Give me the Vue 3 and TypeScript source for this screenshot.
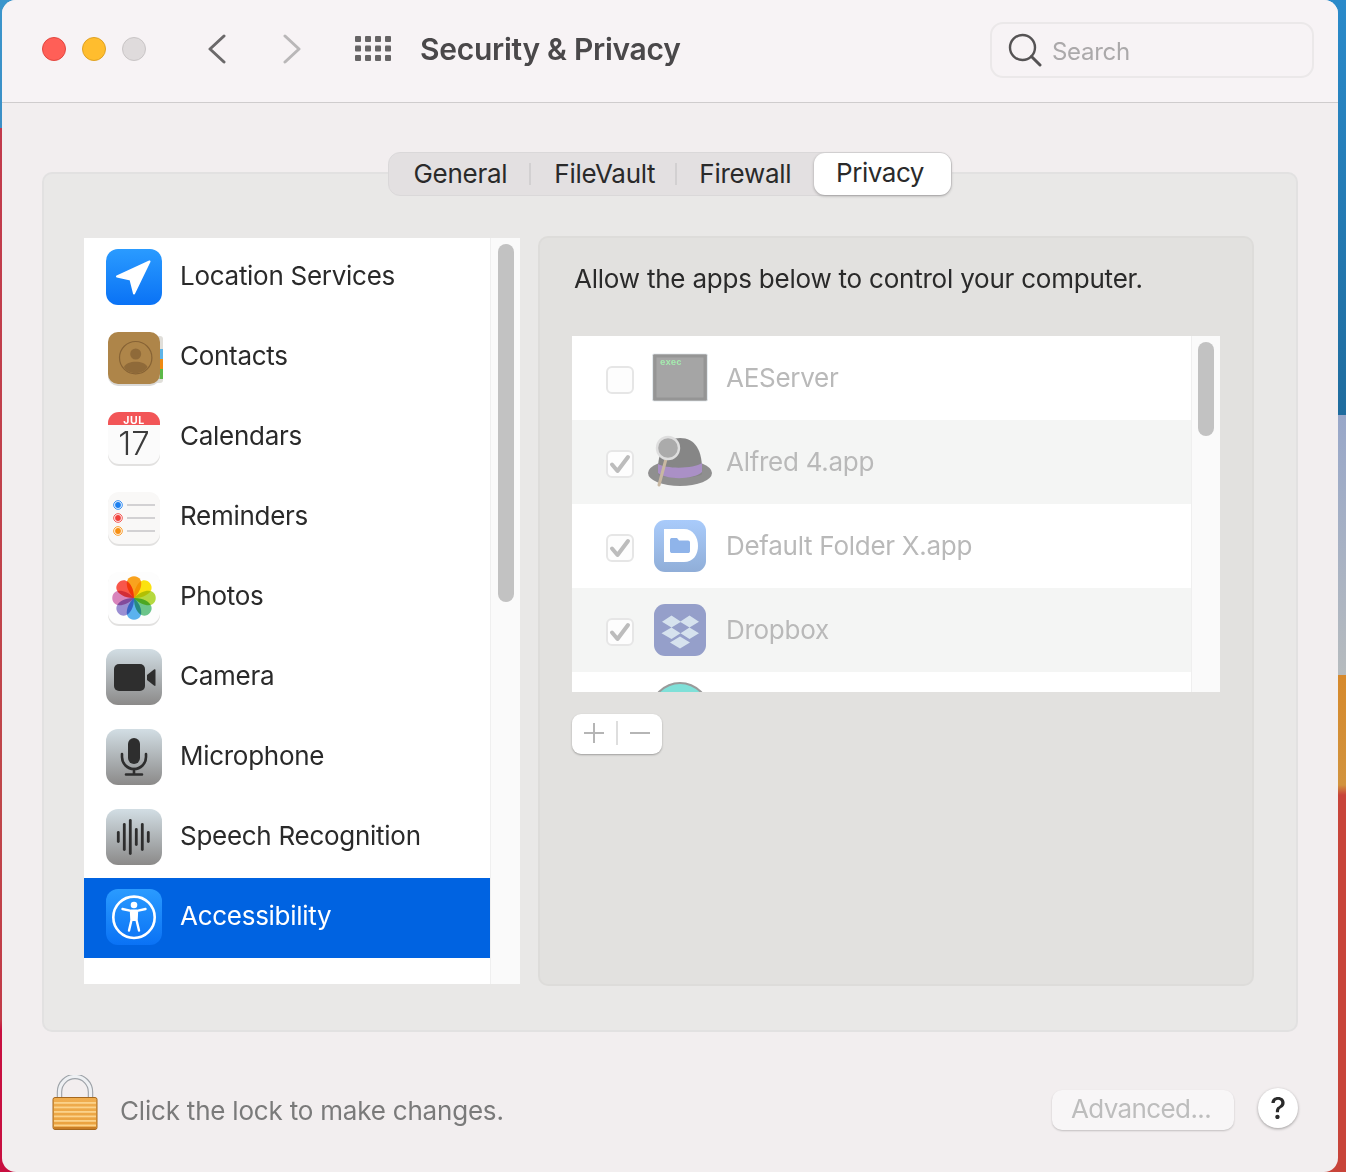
<script setup lang="ts">
const tabs = ['General', 'FileVault', 'Firewall']
const services = [
  { id: 'location', label: 'Location Services' },
  { id: 'contacts', label: 'Contacts' },
  { id: 'calendars', label: 'Calendars' },
  { id: 'reminders', label: 'Reminders' },
  { id: 'photos', label: 'Photos' },
  { id: 'camera', label: 'Camera' },
  { id: 'microphone', label: 'Microphone' },
  { id: 'speech', label: 'Speech Recognition' },
  { id: 'accessibility', label: 'Accessibility' },
]
const apps = [
  { id: 'exec', label: 'AEServer', checked: false },
  { id: 'alfred', label: 'Alfred 4.app', checked: true },
  { id: 'folder', label: 'Default Folder X.app', checked: true },
  { id: 'dropbox', label: 'Dropbox', checked: true },
  { id: 'teal', label: '', checked: true },
]
const petals = [
  { a: 0, c: '#f9a21e' },
  { a: 45, c: '#fbe20f' },
  { a: 90, c: '#b4d83e' },
  { a: 135, c: '#6cc58a' },
  { a: 180, c: '#5bb2ee' },
  { a: 225, c: '#9a8ed2' },
  { a: 270, c: '#d884bc' },
  { a: 315, c: '#f8564a' },
]
const dots = [
  { y: 16, c: '#1b7ff0' },
  { y: 29, c: '#f0413c' },
  { y: 42, c: '#f78f12' },
]
const grid = [0, 1, 2].flatMap((r) => [0, 1, 2, 3].map((c) => ({ x: c * 10, y: r * 9.5 })))
const bars = [
  { x: 12.3, h: 12 },
  { x: 18.3, h: 28 },
  { x: 24.3, h: 36 },
  { x: 30.3, h: 18 },
  { x: 36.3, h: 28 },
  { x: 42.3, h: 12 },
]
const stripes = [5, 9.5, 14, 18.5, 23, 27.5]
</script>

<template>
  <div class="desktop">
    <div class="window">
      <header class="titlebar">
        <div class="lights">
          <span class="light red"></span>
          <span class="light yellow"></span>
          <span class="light grey"></span>
        </div>
        <svg class="chev back" width="20" height="30" viewBox="0 0 20 30">
          <path d="M17 2 L3 15 L17 28" fill="none" stroke="#6b696a" stroke-width="3" stroke-linecap="round" stroke-linejoin="round" />
        </svg>
        <svg class="chev forward" width="20" height="30" viewBox="0 0 20 30">
          <path d="M3 2 L17 15 L3 28" fill="none" stroke="#b9b7b8" stroke-width="3" stroke-linecap="round" stroke-linejoin="round" />
        </svg>
        <svg class="gridicon" width="36" height="26" viewBox="0 0 36 26">
          <rect v-for="(g, i) in grid" :key="i" :x="g.x" :y="g.y" width="6" height="6" rx="1" fill="#666465" />
        </svg>
        <h1 class="title">Security &amp; Privacy</h1>
        <div class="search">
          <svg width="34" height="34" viewBox="0 0 34 34">
            <circle cx="14.5" cy="14.5" r="12.5" fill="none" stroke="#555354" stroke-width="2.4" />
            <path d="M23.5 23.5 L32 32" stroke="#555354" stroke-width="3" stroke-linecap="round" />
          </svg>
          <span class="placeholder">Search</span>
        </div>
      </header>

      <main class="body">
        <nav class="tabs">
          <template v-for="(t, i) in tabs" :key="t">
            <span class="tab" :class="'tab' + i">{{ t }}</span>
            <span v-if="i < 2" class="tabdiv" :class="'tabdiv' + i"></span>
          </template>
          <span class="tab active">Privacy</span>
        </nav>

        <section class="group">
          <div class="services">
            <ul class="svc-list">
              <li v-for="s in services" :key="s.id" class="svc" :class="{ selected: s.id === 'accessibility' }">
                <svg class="icon" width="56" height="56" viewBox="0 0 56 56">
                  <defs>
                    <linearGradient :id="'g-' + s.id" x1="0" y1="0" x2="0" y2="1">
                      <stop offset="0" :stop-color="s.id === 'location' || s.id === 'accessibility' ? '#2a9bff' : '#d2dee4'" />
                      <stop offset="1" :stop-color="s.id === 'location' || s.id === 'accessibility' ? '#0a72f5' : '#8b8a89'" />
                    </linearGradient>
                  </defs>
                  <template v-if="s.id === 'location'">
                    <rect width="56" height="56" rx="12" :fill="'url(#g-' + s.id + ')'" />
                    <path d="M43.5 12.5 L11 27.5 L24.5 30.5 L28 44.5 Z" fill="#fff" stroke="#fff" stroke-width="2" stroke-linejoin="round" />
                  </template>
                  <template v-else-if="s.id === 'contacts'">
                    <rect x="46" y="7" width="11" height="47" rx="3" fill="#e0ded9" />
                    <rect x="52" y="20" width="5" height="10" fill="#5db4e8" />
                    <rect x="52" y="30" width="5" height="10" fill="#ee8a12" />
                    <rect x="52" y="40" width="5" height="10" fill="#5cb848" />
                    <rect x="2" y="4" width="52" height="53" rx="10" fill="#dbdad8" />
                    <rect x="2" y="3" width="52" height="52" rx="10" fill="#ae8549" />
                    <circle cx="29.7" cy="28.7" r="16.2" fill="none" stroke="#876335" stroke-width="1.2" />
                    <circle cx="29.7" cy="25" r="5.5" fill="#8f6a39" />
                    <path d="M18 38 C21 31 38.5 31 41.5 38 C37 46 22 46 18 38 Z" fill="#8f6a39" />
                  </template>
                  <template v-else-if="s.id === 'calendars'">
                    <rect x="2" y="4" width="52" height="53" rx="11" fill="#e2e1e0" />
                    <rect x="2" y="3" width="52" height="52" rx="11" fill="#fbfbfb" />
                    <path d="M2 16 V14 A11 11 0 0 1 13 3 H43 A11 11 0 0 1 54 14 V16 Z" fill="#f25557" />
                    <text x="28" y="15" class="cal-m">JUL</text>
                    <text x="28" y="46" class="cal-d">17</text>
                  </template>
                  <template v-else-if="s.id === 'reminders'">
                    <rect x="2" y="4" width="52" height="53" rx="11" fill="#e2e1e0" />
                    <rect x="2" y="3" width="52" height="52" rx="11" fill="#f9f8f7" />
                    <g v-for="d in dots" :key="d.y">
                      <circle cx="12" :cy="d.y" r="4.3" fill="#fff" :stroke="d.c" stroke-width="0.9" />
                      <circle cx="12" :cy="d.y" r="2.9" :fill="d.c" />
                      <rect x="21" :y="d.y - 0.8" width="28" height="1.6" fill="#c9c8ca" />
                    </g>
                  </template>
                  <template v-else-if="s.id === 'photos'">
                    <rect x="2" y="4" width="52" height="53" rx="11" fill="#e2e1e0" />
                    <rect x="2" y="3" width="52" height="52" rx="11" fill="#fdfdfd" />
                    <g class="flower" transform="translate(0 1)">
                      <g v-for="p in petals" :key="p.a" :transform="'rotate(' + p.a + ' 28 28)'">
                        <path class="petal" d="M28 28 C21.5 22 19.5 14 21.5 10 C24 5 32 5 34.5 10 C36.5 14 34.5 22 28 28 Z" :fill="p.c" />
                      </g>
                    </g>
                  </template>
                  <template v-else-if="s.id === 'camera'">
                    <rect width="56" height="56" rx="12" :fill="'url(#g-' + s.id + ')'" />
                    <rect x="8" y="15" width="31" height="27" rx="5" fill="#2e2e2e" />
                    <path d="M41 26 L48 20.5 C49 19.8 49.5 20.2 49.5 21 V36 C49.5 37 49 37.2 48 36.5 L41 31 Z" fill="#2e2e2e" />
                  </template>
                  <template v-else-if="s.id === 'microphone'">
                    <rect width="56" height="56" rx="12" :fill="'url(#g-' + s.id + ')'" />
                    <rect x="22" y="9" width="12" height="26" rx="6" fill="#2e2e2e" />
                    <path d="M16 25 V28 A12 12 0 0 0 40 28 V25" fill="none" stroke="#2e2e2e" stroke-width="2.6" stroke-linecap="round" />
                    <path d="M28 40 V45 M20 45.5 H36" stroke="#2e2e2e" stroke-width="2.6" stroke-linecap="round" />
                  </template>
                  <template v-else-if="s.id === 'speech'">
                    <rect width="56" height="56" rx="12" :fill="'url(#g-' + s.id + ')'" />
                    <rect v-for="b in bars" :key="b.x" :x="b.x - 1.4" :y="28 - b.h / 2" width="2.8" :height="b.h" rx="1.4" fill="#2e2e2e" />
                  </template>
                  <template v-else>
                    <rect width="56" height="56" rx="12" :fill="'url(#g-' + s.id + ')'" />
                    <circle cx="28" cy="28.3" r="20.7" fill="none" stroke="#fff" stroke-width="2.6" />
                    <circle cx="28" cy="16" r="3.3" fill="#fff" />
                    <path d="M24.5 21.5 H31.5 L31 32 H25 Z" fill="#fff" />
                    <path d="M16.5 20 L25 21.8 H31 L39.5 20 M25 22 L25.5 31 L23 41.5 M31 22 L30.5 31 L33 41.5" fill="none" stroke="#fff" stroke-width="2.4" stroke-linecap="round" stroke-linejoin="round" />
                  </template>
                </svg>
                <span class="svc-label">{{ s.label }}</span>
              </li>
            </ul>
            <div class="track track-left"><span class="thumb thumb-left"></span></div>
          </div>

          <div class="panel">
            <p class="panel-title">Allow the apps below to control your computer.</p>
            <div class="apps">
              <ul class="app-list">
                <li v-for="a in apps" :key="a.id" class="app">
                  <span class="check">
                    <svg v-if="a.checked" width="22" height="20" viewBox="0 0 22 20">
                      <path d="M3 10.5 L8.5 17 L19 3" fill="none" stroke="#bcbcbc" stroke-width="4" stroke-linecap="round" stroke-linejoin="round" />
                    </svg>
                  </span>
                  <svg class="appicon" width="56" height="56" viewBox="0 0 56 56">
                    <template v-if="a.id === 'exec'">
                      <rect x="0.5" y="4" width="55" height="47" rx="1.5" fill="#a5a5a5" stroke="#e4eaee" stroke-width="1" />
                      <rect x="3" y="6" width="50" height="43" fill="none" stroke="#959595" stroke-width="3" />
                      <text x="8" y="15" class="exec">exec</text>
                    </template>
                    <template v-else-if="a.id === 'alfred'">
                      <ellipse cx="28" cy="39" rx="32" ry="13" fill="#8f8f8f" />
                      <path d="M6 40 C5 16 14 4 28 4 C43 4 51 16 50 40 C44 45 12 45 6 40 Z" fill="#868686" />
                      <path d="M6 30 C14 35 42 35 50 29 V38 C42 46 14 46 6 39 Z" fill="#aa90c6" />
                      <path d="M14 25 L7 51" stroke="#c8b8a2" stroke-width="3" stroke-linecap="round" />
                      <circle cx="16" cy="14" r="11" fill="#ababab" stroke="#dedede" stroke-width="2.4" />
                    </template>
                    <template v-else-if="a.id === 'folder'">
                      <defs>
                        <linearGradient id="g-folder" x1="0" y1="0" x2="0" y2="1">
                          <stop offset="0" stop-color="#a9cbfb" />
                          <stop offset="1" stop-color="#90aed8" />
                        </linearGradient>
                      </defs>
                      <rect x="2" y="2" width="52" height="52" rx="11" fill="url(#g-folder)" />
                      <path d="M12 11 H32 C41 11 46 19 46 28 C46 37 41 44 32 44 H12 Z" fill="#fff" />
                      <path d="M18 22 C18 20.5 19 20 20 20 H25 L27 22.5 H36 C37.5 22.5 38 23.5 38 24.5 V33 C38 34.5 37 35 36 35 H20 C19 35 18 34.5 18 33 Z" fill="#8fb4ea" />
                    </template>
                    <template v-else-if="a.id === 'dropbox'">
                      <rect x="2" y="2" width="52" height="52" rx="11" fill="#959fca" />
                      <path d="M19.5 13.5 L29 19.7 L19.5 25.5 L10 19.7 Z M37.5 13.5 L47 19.7 L37.5 25.5 L28 19.7 Z M19.5 25.5 L28.5 31.3 L19.5 37 L9.5 31.3 Z M37.5 25.5 L47 31.3 L37.5 37 L28.5 31.3 Z M28 34.5 L38 40.5 L28 46.5 L18 40.5 Z" fill="#d6e2ee" />
                    </template>
                    <template v-else>
                      <circle cx="28" cy="26" r="30" fill="#9a9a9a" />
                      <circle cx="28" cy="26" r="28" fill="#7fe0d8" />
                      <circle cx="28" cy="28" r="22" fill="#b4c8c6" />
                    </template>
                  </svg>
                  <span class="app-label">{{ a.label }}</span>
                </li>
              </ul>
              <div class="track track-right"><span class="thumb thumb-right"></span></div>
            </div>
            <div class="plusminus">
              <svg width="22" height="22" viewBox="0 0 22 22">
                <path d="M11 1 V21 M1 11 H21" stroke="#b5b5b5" stroke-width="2" />
              </svg>
              <span class="pm-div"></span>
              <svg width="22" height="22" viewBox="0 0 22 22">
                <path d="M1 11 H21" stroke="#b5b5b5" stroke-width="2" />
              </svg>
            </div>
          </div>
        </section>

        <footer class="footer">
          <svg class="lock" width="46" height="56" viewBox="0 0 46 56">
            <defs>
              <linearGradient id="g-body" x1="0" y1="0" x2="0" y2="1">
                <stop offset="0" stop-color="#f0ae50" />
                <stop offset="1" stop-color="#e9a03c" />
              </linearGradient>
            </defs>
            <path d="M7.5 24 V17 A15.5 15.5 0 0 1 38.5 17 V24" fill="none" stroke="#9ea3a9" stroke-width="5.5" />
            <path d="M7.5 24 V17 A15.5 15.5 0 0 1 38.5 17 V24" fill="none" stroke="#eef0f3" stroke-width="3.2" />
            <rect x="1" y="22.5" width="44" height="32" rx="2" fill="url(#g-body)" stroke="#a5681f" stroke-width="1" />
            <rect v-for="y in stripes" :key="y" x="2" :y="22 + y" width="42" height="1.8" fill="#fbd28a" />
            <rect x="2" y="52" width="42" height="2" fill="#c97e26" />
          </svg>
          <span class="lock-text">Click the lock to make changes.</span>
          <button class="advanced">Advanced...</button>
          <span class="help">?</span>
        </footer>
      </main>
    </div>
  </div>
</template>

<style>
html,
body {
  margin: 0;
  padding: 0;
}
</style>

<style scoped>
* {
  box-sizing: border-box;
}
.desktop {
  width: 1346px;
  height: 1172px;
  overflow: hidden;
  padding-left: 2px;
  font-family: Inter, 'Liberation Sans', sans-serif;
  font-size: 26px;
  letter-spacing: -0.28px;
  color: #2a2a2a;
  background-image:
    linear-gradient(to bottom, #3b95cc 0, #3b8fc6 128px, #c23a4c 128px, #c0464a 800px, #c23a48 1020px, #c80f40 1030px, #c80f40 100%),
    linear-gradient(to bottom, #2a8aca 0, #1f6c9e 415px, #98a7c9 415px, #b6bbbe 675px, #d6892c 675px, #d2933e 785px, #c8443a 795px, #c8443a 100%);
  background-size: 50% 100%, 50% 100%;
  background-position: left top, right top;
  background-repeat: no-repeat;
}
.window {
  width: 1336px;
  height: 1172px;
  border-radius: 14px;
  background: #f2eeef;
  overflow: hidden;
  display: flex;
  flex-direction: column;
}
.titlebar {
  height: 103px;
  flex: none;
  background: #f7f3f5;
  border-bottom: 1px solid #cfcccd;
  display: flex;
  align-items: center;
  padding-left: 40px;
}
.lights {
  display: flex;
  gap: 16px;
  margin-top: -4px;
}
.light {
  width: 24px;
  height: 24px;
  border-radius: 50%;
}
.red {
  background: #ff5f57;
  border: 1px solid #e2463f;
}
.yellow {
  background: #ffbd2e;
  border: 1px solid #dfa123;
}
.grey {
  background: #dfdbdc;
  border: 1px solid #c9c5c6;
}
.chev {
  margin-top: -4px;
}
.back {
  margin-left: 61px;
}
.forward {
  margin-left: 55px;
}
.gridicon {
  margin-left: 53px;
  margin-top: -5px;
}
.title {
  margin: -5px 0 0 29px;
  font-size: 30px;
  font-weight: 600;
  letter-spacing: -0.28px;
  color: #4a484a;
}
.search {
  margin-left: auto;
  margin-right: 24px;
  margin-top: -3px;
  width: 324px;
  height: 56px;
  border: 2px solid #ebe8e9;
  border-radius: 13px;
  display: flex;
  align-items: center;
  padding-left: 16px;
  gap: 10px;
}
.placeholder {
  font-size: 24px;
  margin-top: 3px;
  color: #aba9aa;
}
.body {
  flex: 1;
  padding: 49px 40px 0;
  display: flex;
  flex-direction: column;
}
.tabs {
  position: relative;
  z-index: 1;
  align-self: center;
  margin-left: -1px;
  width: 564px;
  height: 44px;
  border-radius: 12px;
  background: #e3e0e1;
  border: 1px solid #dad8d9;
  display: flex;
  align-items: center;
}
.tab {
  line-height: 40px;
}
.tab0 {
  margin-left: 25px;
}
.tabdiv {
  width: 2px;
  height: 22px;
  background: #d2d0d1;
}
.tabdiv0 {
  margin: 0 23px 0 22px;
}
.tabdiv1 {
  margin: 0 22px 0 20px;
}
.active {
  margin-left: auto;
  width: 137px;
  height: 42px;
  border-radius: 11px;
  background: #fff;
  box-shadow: 0 1px 3px rgba(0, 0, 0, 0.3);
  text-align: center;
  letter-spacing: -0.45px;
  padding-right: 4px;
}
.group {
  margin-top: -24px;
  width: 1256px;
  height: 860px;
  flex: none;
  background: #e9e8e7;
  border: 2px solid #e2e1e1;
  border-radius: 10px;
  padding: 62px 42px 0 40px;
  display: flex;
  gap: 18px;
  align-items: flex-start;
}
.services {
  margin-top: 2px;
  width: 436px;
  height: 746px;
  flex: none;
  background: #fff;
  display: flex;
}
ul {
  list-style: none;
  margin: 0;
  padding: 0;
}
.svc-list {
  width: 406px;
  flex: none;
}
.svc {
  height: 80px;
  display: flex;
  align-items: center;
  padding-left: 22px;
  gap: 18px;
}
.svc-label {
  margin-top: -6px;
}
.selected {
  background: #0063e1;
  color: #fff;
}
.icon {
  margin-top: -2px;
}
.icon,
.appicon {
  flex: none;
  overflow: visible;
}
.petal {
  mix-blend-mode: multiply;
}
.flower {
  isolation: isolate;
}
.cal-m {
  font-size: 10.5px;
  font-weight: 700;
  letter-spacing: 0.5px;
  fill: #fff;
  text-anchor: middle;
}
.cal-d {
  font-size: 33px;
  font-weight: 300;
  letter-spacing: 0;
  fill: #3c3c3c;
  text-anchor: middle;
}
.exec {
  font-family: 'Liberation Mono', monospace;
  font-size: 9px;
  font-weight: 700;
  letter-spacing: 0;
  fill: #a4ecae;
}
.track {
  flex: 1;
  background: #fafafa;
  border-left: 1px solid #efefef;
  display: flex;
  justify-content: center;
  padding-top: 6px;
}
.thumb {
  width: 16px;
  border-radius: 8px;
  background: #c2c2c2;
}
.thumb-left {
  height: 358px;
}
.thumb-right {
  height: 94px;
}
.panel {
  width: 716px;
  height: 750px;
  flex: none;
  background: #e2e1df;
  border: 2px solid #dddcda;
  border-radius: 10px;
  padding: 0 32px;
}
.panel-title {
  margin: 0;
  height: 98px;
  padding: 21px 0 0 2px;
  line-height: 40px;
  letter-spacing: -0.22px;
  color: #2a2a2a;
}
.apps {
  width: 648px;
  height: 356px;
  background: #fff;
  overflow: hidden;
  display: flex;
}
.app-list {
  width: 619px;
  flex: none;
}
.app {
  height: 84px;
  display: flex;
  align-items: center;
  padding-left: 34px;
}
.app:nth-child(even) {
  background: #f4f5f4;
}
.check {
  width: 28px;
  height: 28px;
  flex: none;
  margin-top: 4px;
  border: 2px solid #e6e6e6;
  border-radius: 6px;
  background: #fdfdfd;
  display: flex;
  align-items: center;
  justify-content: center;
}
.appicon {
  margin-left: 18px;
}
.app-label {
  margin-left: 18px;
  margin-top: -2px;
  color: #b9b9b9;
}
.plusminus {
  margin-top: 22px;
  padding-bottom: 2px;
  width: 90px;
  height: 40px;
  border-radius: 9px;
  background: #fff;
  box-shadow: 0 1px 2px rgba(0, 0, 0, 0.3);
  display: flex;
  align-items: center;
  justify-content: center;
  gap: 11px;
}
.pm-div {
  width: 2px;
  height: 24px;
  background: #dedede;
}
.footer {
  flex: 1;
  display: flex;
  align-items: center;
  padding: 0 0 0 10px;
}
.lock {
  margin-top: 2px;
  flex: none;
}
.lock-text {
  margin-left: 22px;
  margin-top: 17px;
  letter-spacing: -0.2px;
  color: #7a7a7a;
}
.advanced {
  margin-left: auto;
  margin-top: 16px;
  width: 182px;
  height: 40px;
  font: inherit;
  letter-spacing: -0.6px;
  color: #bdbdbd;
  background: #f8f6f7;
  border: none;
  border-radius: 10px;
  box-shadow: 0 1px 2px rgba(0, 0, 0, 0.2);
  padding: 0 4px 4px 0;
}
.help {
  margin-left: 24px;
  margin-top: 12px;
  width: 40px;
  height: 40px;
  border-radius: 50%;
  background: #fff;
  box-shadow: 0 1px 3px rgba(0, 0, 0, 0.35);
  display: flex;
  align-items: center;
  justify-content: center;
  font-size: 30px;
  font-weight: 500;
  color: #2a2a2a;
}
</style>
